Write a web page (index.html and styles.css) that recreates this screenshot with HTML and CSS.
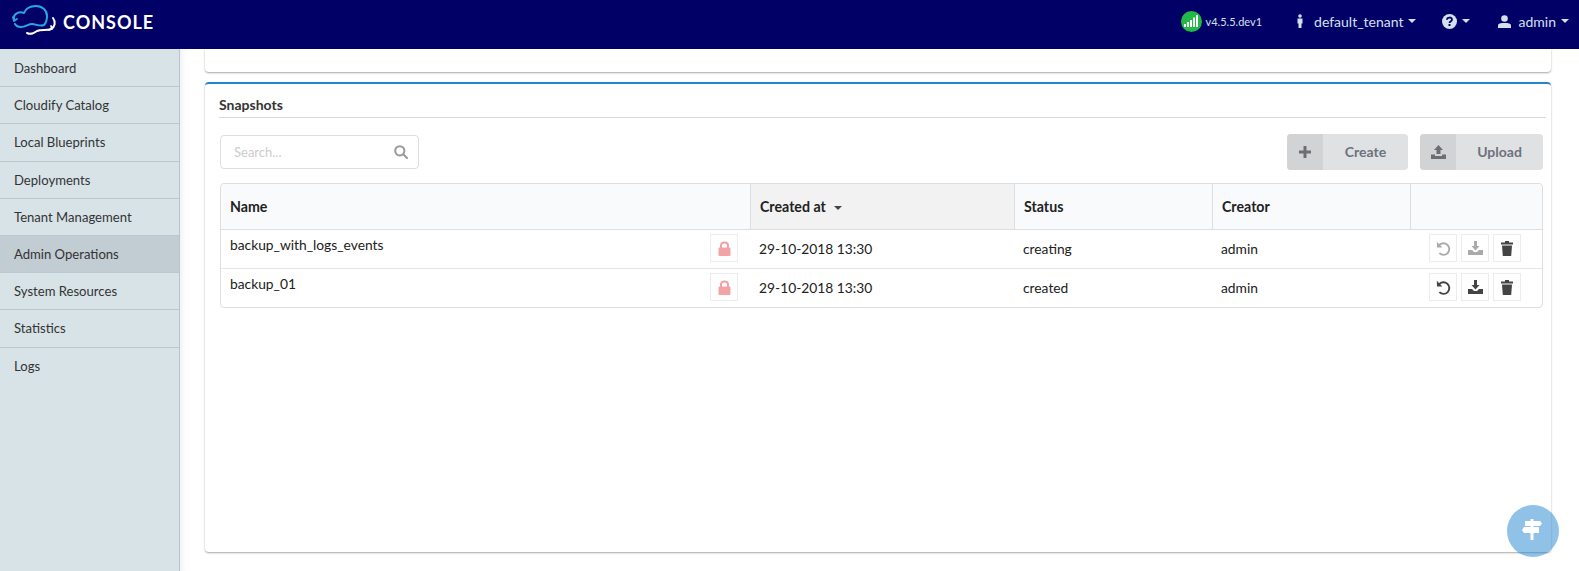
FILE: index.html
```html
<!DOCTYPE html>
<html lang="en">
<head>
    <meta charset="UTF-8">
    <title>Cloudify Console</title>
    <link rel="stylesheet" href="styles.css">
</head>
<body>

<!-- Top bar -->
<header class="topbar">
    <div class="brand">
        <svg class="logo" width="46" height="49" viewBox="12 0 46 49" fill="none" stroke-linecap="round" stroke-linejoin="round">
            <path d="M14 19 C13 14 19 11 24 13 C26 8 31 6 36 6 C42 6 47 10 47 16 C47 20 46 23 44 25 C40 27 36 24 32 24 C28 24 26 27 21 27 C18 27 16 26 15 24" stroke="#29a8e0" stroke-width="2"/>
            <path d="M13 17 L14 21 L17 19" stroke="#29a8e0" stroke-width="1.8"/>
            <path d="M27 33 C31 35 34 33 37 31 C41 29 47 31 51 29 C55 27 56 22 53 18" stroke="#ffffff" stroke-width="2"/>
            <path d="M51 26 L52 29 L49 30" stroke="#ffffff" stroke-width="1.8"/>
        </svg>
        <span class="brand-name">CONSOLE</span>
    </div>
    <div class="top-menu">
        <span class="version">
            <span class="status-dot">
                <svg width="14" height="12" viewBox="0 0 14 12" fill="#ffffff"><rect x="0" y="9" width="2" height="3"/><rect x="3" y="7" width="2" height="5"/><rect x="6" y="5" width="2" height="7"/><rect x="9" y="2.5" width="2" height="9.5"/><rect x="12" y="0" width="2" height="12"/></svg>
            </span>
            v4.5.5.dev1
        </span>
        <span class="menu-item tenant">
            <svg width="8" height="14" viewBox="0 0 8 14" fill="#d4e0ee"><circle cx="4" cy="2" r="1.8"/><path d="M1.5 4.5 H6.5 V9.5 H5.5 V14 H2.5 V9.5 H1.5 Z"/></svg>
            default_tenant <i class="caret"></i>
        </span>
        <span class="menu-item help">
            <svg width="15" height="15" viewBox="0 0 15 15"><circle cx="7.5" cy="7.5" r="7.5" fill="#d4e0ee"/><path d="M5 5.8 C5 2.8 10 2.8 10 5.6 C10 7.6 7.5 7.4 7.5 9" fill="none" stroke="#000066" stroke-width="1.8"/><rect x="6.5" y="10" width="2" height="2" fill="#000066"/></svg>
            <i class="caret"></i>
        </span>
        <span class="menu-item user">
            <svg width="13" height="13" viewBox="0 0 13 13" fill="#d4e0ee"><circle cx="6.5" cy="3.5" r="3.3"/><path d="M0 13 V10.5 C0 8.5 3 8 6.5 8 C10 8 13 8.5 13 10.5 V13 Z"/></svg>
            admin <i class="caret"></i>
        </span>
    </div>
</header>

<div class="layout">
    <!-- Side menu -->
    <nav class="sidebar">
        <a class="nav-item">Dashboard</a>
        <a class="nav-item">Cloudify Catalog</a>
        <a class="nav-item">Local Blueprints</a>
        <a class="nav-item">Deployments</a>
        <a class="nav-item">Tenant Management</a>
        <a class="nav-item active">Admin Operations</a>
        <a class="nav-item">System Resources</a>
        <a class="nav-item">Statistics</a>
        <a class="nav-item">Logs</a>
    </nav>

    <main class="content">
        <div class="card card-top"></div>

        <section class="card card-snapshots">
            <h4 class="card-title">Snapshots</h4>

            <div class="toolbar">
                <div class="search">
                    <span class="search-text">Search...</span>
                    <svg width="14" height="14" viewBox="0 0 14 14" fill="none" stroke="#999999" stroke-width="2"><circle cx="5.8" cy="5.8" r="4.6"/><path d="M9.2 9.2 L13 13" stroke-linecap="round"/></svg>
                </div>
                <div class="actions">
                    <button type="button" class="btn btn-create">
                        <span class="btn-icon"><svg width="12" height="12" viewBox="0 0 12 12" fill="#6b6f73"><path d="M4.5 0 H7.5 V4.5 H12 V7.5 H7.5 V12 H4.5 V7.5 H0 V4.5 H4.5 Z"/></svg></span>
                        <span class="btn-label">Create</span>
                    </button>
                    <button type="button" class="btn btn-upload">
                        <span class="btn-icon"><svg width="15" height="14" viewBox="0 0 15 14" fill="#6b6f73"><path d="M7.5 0 L12 5 H9.5 V9 H5.5 V5 H3 Z"/><path d="M0 9.5 H4 V11 H11 V9.5 H15 V14 H0 Z"/></svg></span>
                        <span class="btn-label">Upload</span>
                    </button>
                </div>
            </div>

            <table class="snapshots">
                <thead>
                    <tr>
                        <th class="col-name">Name</th>
                        <th class="col-date sorted">Created at <i class="caret dark"></i></th>
                        <th class="col-status">Status</th>
                        <th class="col-creator">Creator</th>
                        <th class="col-actions"></th>
                    </tr>
                </thead>
                <tbody>
                    <tr>
                        <td>
                            <div class="name-cell">
                                <span class="name-text">backup_with_logs_events</span>
                                <span class="icon-btn lock"><svg width="13" height="15" viewBox="0 0 13 15" fill="#f2a3a5"><path d="M3 7 V4.5 C3 0.5 10 0.5 10 4.5 V7" fill="none" stroke="#f2a3a5" stroke-width="2"/><rect x="0.5" y="6.5" width="12" height="8.5" rx="1"/></svg></span>
                            </div>
                        </td>
                        <td>29-10-2018 13:30</td>
                        <td>creating</td>
                        <td>admin</td>
                        <td>
                            <div class="row-actions">
                                <span class="icon-btn faded"><svg width="15" height="15" viewBox="0 0 15 15" fill="none" stroke="#444" stroke-width="1.9"><path d="M3.4 12.2 A5.8 5.8 0 1 0 3 4.4"/><path d="M0.8 0.8 L1 6.4 H6.4 Z" fill="#444" stroke="none"/></svg></span>
                                <span class="icon-btn faded"><svg width="15" height="14" viewBox="0 0 15 14" fill="#444"><path d="M6 0 H9 V5 H11.5 L7.5 9.5 L3.5 5 H6 Z"/><path d="M0 9 H4 L6 11 H9 L11 9 H15 V14 H0 Z"/></svg></span>
                                <span class="icon-btn"><svg width="12" height="15" viewBox="0 0 12 15" fill="#444"><rect x="0" y="1.5" width="12" height="2"/><rect x="4" y="0" width="4" height="2"/><path d="M1 4.5 H11 L10.2 15 H1.8 Z"/></svg></span>
                            </div>
                        </td>
                    </tr>
                    <tr>
                        <td>
                            <div class="name-cell">
                                <span class="name-text">backup_01</span>
                                <span class="icon-btn lock"><svg width="13" height="15" viewBox="0 0 13 15" fill="#f2a3a5"><path d="M3 7 V4.5 C3 0.5 10 0.5 10 4.5 V7" fill="none" stroke="#f2a3a5" stroke-width="2"/><rect x="0.5" y="6.5" width="12" height="8.5" rx="1"/></svg></span>
                            </div>
                        </td>
                        <td>29-10-2018 13:30</td>
                        <td>created</td>
                        <td>admin</td>
                        <td>
                            <div class="row-actions">
                                <span class="icon-btn"><svg width="15" height="15" viewBox="0 0 15 15" fill="none" stroke="#444" stroke-width="1.9"><path d="M3.4 12.2 A5.8 5.8 0 1 0 3 4.4"/><path d="M0.8 0.8 L1 6.4 H6.4 Z" fill="#444" stroke="none"/></svg></span>
                                <span class="icon-btn"><svg width="15" height="14" viewBox="0 0 15 14" fill="#444"><path d="M6 0 H9 V5 H11.5 L7.5 9.5 L3.5 5 H6 Z"/><path d="M0 9 H4 L6 11 H9 L11 9 H15 V14 H0 Z"/></svg></span>
                                <span class="icon-btn"><svg width="12" height="15" viewBox="0 0 12 15" fill="#444"><rect x="0" y="1.5" width="12" height="2"/><rect x="4" y="0" width="4" height="2"/><path d="M1 4.5 H11 L10.2 15 H1.8 Z"/></svg></span>
                            </div>
                        </td>
                    </tr>
                </tbody>
            </table>
        </section>
    </main>
</div>

<!-- Floating help button -->
<div class="fab">
    <svg width="20" height="21" viewBox="0 0 20 21" fill="#ffffff"><rect x="8.5" y="0" width="3" height="21"/><path d="M3 2 H18 L20 4.5 L18 7 H3 Z"/><path d="M2 8 H17 V14 H2 L0 11 Z"/></svg>
</div>

</body>
</html>
```

FILE: styles.css
```css
* {
    box-sizing: border-box;
}

html, body {
    height: 100%;
}

body {
    margin: 0;
    font-family: Lato, "Open Sans", sans-serif;
    font-size: 14px;
    color: #212121;
    background-color: #fff;
    overflow: hidden;
    display: flex;
    flex-direction: column;
}

.topbar {
    height: 49px;
    flex: none;
    background-color: #000066;
    display: flex;
    align-items: center;
    justify-content: space-between;
    padding: 0 10px 0 12px;
    color: #d4e0ee;
}

.brand {
    display: flex;
    align-items: center;
}

.logo {
    margin-right: 5px;
}

.brand-name {
    color: #fff;
    font-size: 18px;
    font-weight: 700;
    letter-spacing: 1px;
    margin-bottom: 5px;
}

.top-menu {
    display: flex;
    align-items: center;
    margin-bottom: 7px;
}

.version {
    display: flex;
    align-items: center;
    font-size: 11px;
    gap: 4px;
    margin-right: 34px;
}

.status-dot {
    width: 21px;
    height: 21px;
    border-radius: 50%;
    background-color: #21ba45;
    display: flex;
    align-items: center;
    justify-content: center;
}

.menu-item {
    display: flex;
    align-items: center;
    gap: 5px;
}

.tenant {
    gap: 0;
    margin-right: 26px;
}

.tenant svg {
    margin-right: 10px;
}

.tenant .caret {
    margin-left: 4px;
}

.help {
    margin-right: 28px;
}

.user {
    gap: 8px;
}

.user .caret {
    margin-left: -3px;
}

.caret {
    display: inline-block;
    width: 0;
    height: 0;
    border-left: 4px solid transparent;
    border-right: 4px solid transparent;
    border-top: 4px solid #d4e0ee;
}

.caret.dark {
    border-top-color: #444;
    margin-left: 5px;
    vertical-align: 2px;
}

.layout {
    flex: 1;
    display: flex;
    min-height: 0;
}

.sidebar {
    width: 180px;
    flex: none;
    padding-top: 1px;
    background-color: #d8e3e8;
    border-right: 1px solid #b9c4cb;
}

.nav-item {
    display: block;
    height: 37.2px;
    line-height: 36px;
    padding-left: 14px;
    font-size: 13.1px;
    color: #333;
    border-bottom: 1px solid #bcc8ce;
}

.nav-item:last-child {
    border-bottom: none;
}

.nav-item.active {
    background-color: #c2ccd3;
}

.content {
    flex: 1;
    min-width: 0;
    padding: 0 28px 0 25px;
    display: flex;
    flex-direction: column;
    box-shadow: inset 8px 0 8px -8px rgba(0, 0, 0, 0.1);
}

.card {
    background-color: #fff;
    border-radius: 4px;
    box-shadow: 0 1px 2px rgba(0, 0, 0, 0.35);
}

.card-top {
    height: 23px;
    flex: none;
    border-radius: 0 0 4px 4px;
}

.card-snapshots {
    margin-top: 10px;
    height: 470px;
    flex: none;
    border-top: 2px solid #2185d0;
    padding: 13px 5px 0 14px;
}

.card-title {
    margin: 0;
    font-size: 14px;
    font-weight: 700;
    color: #333;
    height: 21px;
    line-height: 15px;
    border-bottom: 1px solid #d9d9d9;
}

.toolbar {
    display: flex;
    justify-content: space-between;
    align-items: center;
    margin-top: 16px;
    margin-bottom: 13px;
    padding-right: 3px;
}

.search {
    width: 199px;
    height: 34px;
    margin-left: 1px;
    border: 1px solid #dedede;
    border-radius: 4px;
    display: flex;
    align-items: center;
    justify-content: space-between;
    padding: 0 10px 0 13px;
}

.search-text {
    color: #cccccc;
    font-size: 13px;
}

.actions {
    display: flex;
    gap: 12px;
}

.btn {
    height: 36px;
    padding: 0;
    border: none;
    border-radius: 4px;
    background-color: #e0e1e2;
    color: #6b7280;
    font-family: inherit;
    font-size: 14px;
    font-weight: 700;
    display: flex;
    align-items: stretch;
    overflow: hidden;
}

.btn-create {
    width: 121px;
}

.btn-upload {
    width: 123px;
}

.btn-icon {
    width: 36px;
    flex: none;
    background-color: #d2d3d4;
    display: flex;
    align-items: center;
    justify-content: center;
}

.btn-label {
    flex: 1;
    display: flex;
    align-items: center;
    justify-content: center;
    padding-bottom: 2px;
}

.snapshots {
    width: 1323px;
    margin-left: 1px;
    border-collapse: separate;
    border-spacing: 0;
    border: 1px solid #dcdedf;
    border-radius: 4px;
    table-layout: fixed;
}

.snapshots th {
    height: 46px;
    text-align: left;
    font-weight: 700;
    font-size: 14.2px;
    padding: 0 9px;
    background-color: #f9fafb;
    border-bottom: 1px solid #dcdedf;
    border-left: 1px solid #dcdedf;
}

.snapshots th:first-child {
    border-left: none;
    border-radius: 4px 0 0 0;
}

.snapshots th:last-child {
    border-radius: 0 4px 0 0;
}

.snapshots th.sorted {
    background-color: #f2f2f2;
}

.col-name {
    width: 529px;
}

.col-date {
    width: 264px;
}

.col-status {
    width: 198px;
}

.col-creator {
    width: 198px;
}

.snapshots td {
    height: 39px;
    padding: 0 9px 2px;
    font-size: 13.8px;
    border-bottom: 1px solid #e4e6e7;
}

.snapshots tr:last-child td {
    height: 38px;
    border-bottom: none;
}

.name-cell {
    display: flex;
    justify-content: space-between;
    align-items: center;
}

.name-text {
    margin-bottom: 8px;
}

.icon-btn {
    width: 28px;
    height: 28px;
    border: 1px solid #ececec;
    display: flex;
    align-items: center;
    justify-content: center;
    background-color: #fff;
}

.icon-btn.lock {
    margin-right: 3px;
}

.icon-btn.faded svg {
    opacity: 0.45;
}

.row-actions {
    display: flex;
    gap: 4px;
    padding-left: 10px;
}

.fab {
    position: fixed;
    left: 1507px;
    top: 505px;
    width: 52px;
    height: 52px;
    border-radius: 50%;
    background-color: rgba(33, 133, 208, 0.5);
    display: flex;
    align-items: center;
    justify-content: center;
    padding: 0 2px 3px 0;
}
```
